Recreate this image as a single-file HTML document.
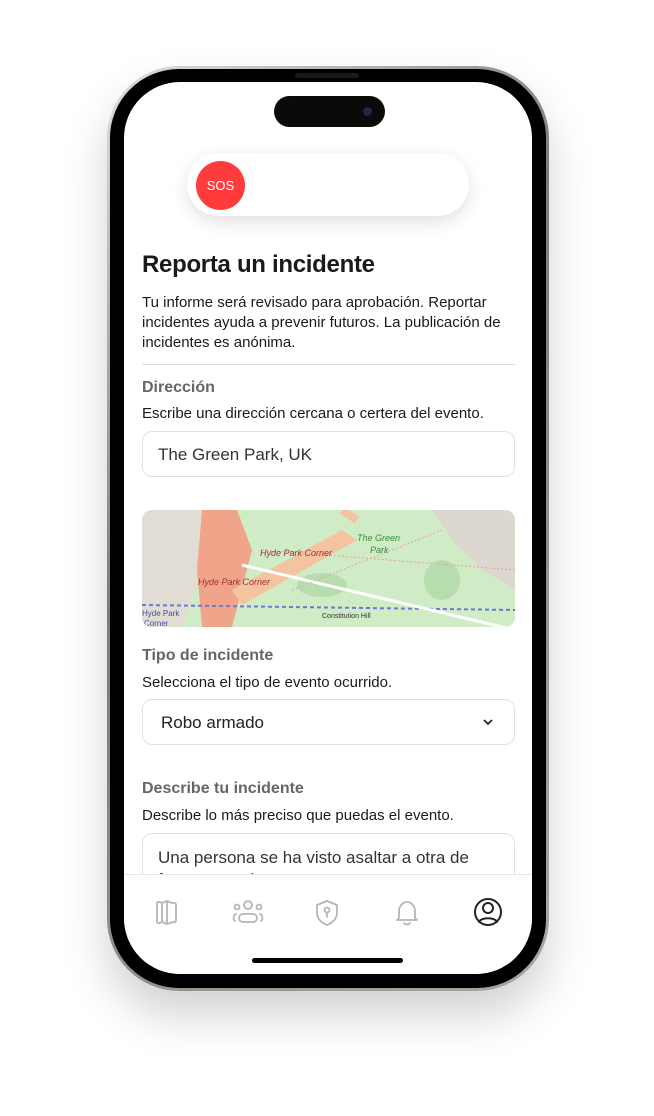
<!DOCTYPE html>
<html><head><meta charset="utf-8"><style>
*{margin:0;padding:0;box-sizing:border-box}
body{width:654px;height:1116px;background:#fff;position:relative;overflow:hidden;font-family:"Liberation Sans",sans-serif;color:#1a1a1a}
.frame{position:absolute;left:107px;top:66px;width:442px;height:925px;border-radius:72px;background:linear-gradient(135deg,#e0e0d8,#7c7c76 40%,#a8a8a0);box-shadow:0 25px 45px rgba(0,0,0,.18)}
.bezel{position:absolute;left:110px;top:69px;width:436px;height:919px;border-radius:69px;background:#000}
.screen{position:absolute;left:124px;top:82px;width:408px;height:892px;border-radius:56px;background:#fff;overflow:hidden}
.abs{position:absolute}
.t{position:absolute;left:18px;white-space:nowrap}
.box{position:absolute;left:18px;width:373px;border:1px solid #e2e2e2;border-radius:10px;background:#fff}
</style></head><body>
<div class="frame"></div>
<div class="bezel"></div>
<div class="abs" style="left:295px;top:73px;width:64px;height:5px;border-radius:3px;background:#1a1a1a"></div>
<div class="screen">
 <div class="abs" style="left:150px;top:14px;width:111px;height:31px;border-radius:16px;background:#0a0a0a"></div>
 <div class="abs" style="left:239px;top:25px;width:9px;height:9px;border-radius:50%;background:#1a2a44"></div>
 <div class="abs" style="left:63px;top:71px;width:282px;height:63px;border-radius:32px;background:#fff;box-shadow:0 6px 18px rgba(0,0,0,.12)"></div>
 <div class="abs" style="left:72px;top:79px;width:49px;height:49px;border-radius:50%;background:#ff3b3b;color:#fff;font-size:13px;line-height:49px;text-align:center">SOS</div>
 <div class="t" style="top:169px;font-size:24px;font-weight:bold;letter-spacing:-.3px">Reporta un incidente</div>
 <div class="t" style="top:211px;font-size:15px;line-height:20px;white-space:normal;width:375px">Tu informe será revisado para aprobación. Reportar incidentes ayuda a prevenir futuros. La publicación de incidentes es anónima.</div>
 <div class="abs" style="left:18px;top:282px;width:373px;height:1px;background:#ddd"></div>
 <div class="t" style="top:297px;font-size:16px;font-weight:bold;color:#666">Dirección</div>
 <div class="t" style="top:323px;font-size:15px">Escribe una dirección cercana o certera del evento.</div>
 <div class="box" style="top:349px;height:46px;font-size:17px;padding:13px 15px;color:#333">The Green Park, UK</div>
 <div class="abs" style="left:18px;top:428px;width:373px;height:117px;border-radius:10px;overflow:hidden;background:#cdebc5">
  <svg width="373" height="117">
   <rect width="373" height="117" fill="#cfecc6"/>
   <path d="M0 0H70L60 60L40 117H0Z" fill="#e2ddd4"/>
   <path d="M290 0H373V80L340 60L310 30Z" fill="#ddd8cf"/>
   <path d="M60 0L95 0L110 40L90 117H60L55 60Z" fill="#f0a58a"/>
   <path d="M90 80L200 20L215 30L100 95Z" fill="#f4c4a0"/>
   <ellipse cx="180" cy="75" rx="25" ry="12" fill="#b7dcae"/>
   <ellipse cx="300" cy="70" rx="18" ry="20" fill="#b7dcae"/>
   <path d="M0 95L373 100" stroke="#6a7ad0" stroke-width="2" stroke-dasharray="4 3"/>
   <path d="M100 55L373 120" stroke="#fff" stroke-width="3"/>
   <path d="M120 40L373 60M150 80L300 20" stroke="#e8a0a0" stroke-width="1" stroke-dasharray="2 2"/>
   <path d="M200 0L215 10" stroke="#f4c4a0" stroke-width="8"/>
   <text x="118" y="46" font-size="9" fill="#a03030" font-style="italic">Hyde Park Corner</text>
   <text x="56" y="75" font-size="9" fill="#a03030" font-style="italic">Hyde Park Corner</text>
   <text x="215" y="31" font-size="9" fill="#3a8a3a" font-style="italic">The Green</text>
   <text x="228" y="43" font-size="9" fill="#3a8a3a" font-style="italic">Park</text>
   <text x="0" y="106" font-size="8" fill="#4050a0">Hyde Park</text>
   <text x="2" y="116" font-size="8" fill="#4050a0">Corner</text>
   <text x="180" y="108" font-size="7" fill="#333">Constitution Hill</text>
  </svg>
 </div>
 <div class="t" style="top:565px;font-size:16px;font-weight:bold;color:#666">Tipo de incidente</div>
 <div class="t" style="top:592px;font-size:15px">Selecciona el tipo de evento ocurrido.</div>
 <div class="box" style="top:617px;height:46px;font-size:17px;padding:13px 18px;color:#222">Robo armado
  <svg class="abs" style="right:20px;top:17px" width="12" height="10"><path d="M2 3L6 7L10 3" stroke="#222" stroke-width="1.8" fill="none"/></svg></div>
 <div class="t" style="top:698px;font-size:16px;font-weight:bold;color:#666">Describe tu incidente</div>
 <div class="t" style="top:725px;font-size:15px">Describe lo más preciso que puedas el evento.</div>
 <div class="box" style="top:751px;height:80px;font-size:17px;padding:13px 15px;color:#333;line-height:22px;white-space:normal">Una persona se ha visto asaltar a otra de forma armada</div>
 <div class="abs" style="left:0;top:792px;width:408px;height:100px;background:#fff;border-top:1px solid #e8e8e8"></div>
 <svg class="abs" style="left:0;top:814px" width="408" height="34" fill="none" stroke-width="1.8" stroke-linecap="round" stroke-linejoin="round">
  <g stroke="#b5b5b5">
   <path d="M33 8Q33 5 36 6L38 7L43 5L48 7Q52 6 52 9V24Q52 27 49 26L43 28L38 26L36 27Q33 28 33 25Z M38 7V26 M43 5V28"/>
   <circle cx="124" cy="9" r="4"/>
   <rect x="115" y="18" width="18" height="8" rx="4"/>
   <circle cx="113" cy="11" r="2.5"/><circle cx="135" cy="11" r="2.5"/>
   <path d="M111 25C109 24 109 19 112 18M137 25C139 24 139 19 136 18"/>
   <path d="M203 5L213 9V17C213 23 208 27 203 29C198 27 193 23 193 17V9Z"/><circle cx="203" cy="14" r="2.5"/><path d="M203 16.5V21"/>
   <path d="M275 22V15C275 10 279 6 283 6C287 6 291 10 291 15V22L293 24H273Z"/><path d="M280 27C281 29 285 29 286 27"/>
  </g>
  <g stroke="#222" stroke-width="2"><circle cx="364" cy="16" r="13"/><circle cx="364" cy="12" r="5"/><path d="M355 26C357 21 371 21 373 26"/></g>
 </svg>
 <div class="abs" style="left:128px;top:876px;width:151px;height:5px;border-radius:3px;background:#000"></div>
</div>
</body></html>
